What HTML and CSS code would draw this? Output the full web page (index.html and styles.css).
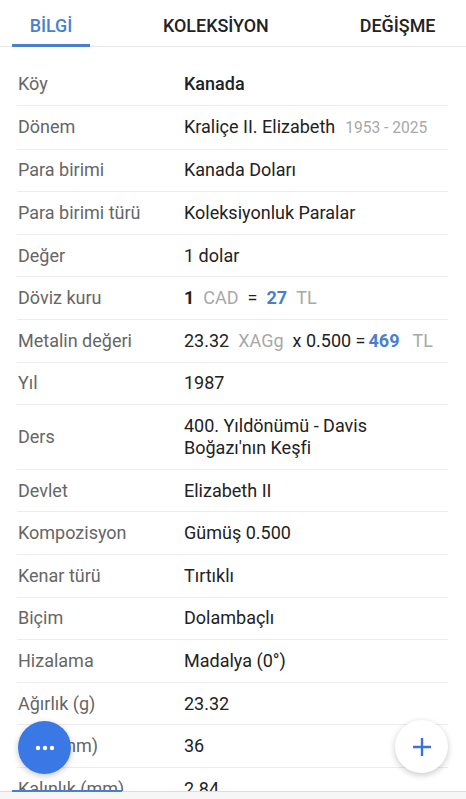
FILE: index.html
```html
<!DOCTYPE html>
<html lang="tr">
<head>
<meta charset="utf-8">
<title>Bilgi</title>
<link rel="stylesheet" href="styles.css">
</head>
<body>
<div class="screen">
  <nav class="tabs">
    <div class="tab active">BİLGİ</div>
    <div class="tab">KOLEKSİYON</div>
    <div class="tab">DEĞİŞME</div>
  </nav>
  <div class="list">
    <div class="row"><div class="label">Köy</div><div class="value strong">Kanada</div></div>
    <div class="row"><div class="label">Dönem</div><div class="value">Kraliçe II. Elizabeth<span class="muted date">1953 - 2025</span></div></div>
    <div class="row"><div class="label">Para birimi</div><div class="value">Kanada Doları</div></div>
    <div class="row"><div class="label">Para birimi türü</div><div class="value">Koleksiyonluk Paralar</div></div>
    <div class="row"><div class="label">Değer</div><div class="value">1 dolar</div></div>
    <div class="row"><div class="label">Döviz kuru</div><div class="value"><b class="num">1</b><span class="muted gap">CAD</span><span class="gap">=</span><b class="blue gap">27</b><span class="muted gap">TL</span></div></div>
    <div class="row"><div class="label">Metalin değeri</div><div class="value">23.32<span class="muted gap">XAGg</span><span class="gap">x 0.500 =</span><b class="blue gap-s">469</b><span class="muted gap-l">TL</span></div></div>
    <div class="row"><div class="label">Yıl</div><div class="value">1987</div></div>
    <div class="row"><div class="label">Ders</div><div class="value">400. Yıldönümü - Davis<br>Boğazı'nın Keşfi</div></div>
    <div class="row"><div class="label">Devlet</div><div class="value">Elizabeth II</div></div>
    <div class="row"><div class="label">Kompozisyon</div><div class="value">Gümüş 0.500</div></div>
    <div class="row"><div class="label">Kenar türü</div><div class="value">Tırtıklı</div></div>
    <div class="row"><div class="label">Biçim</div><div class="value">Dolambaçlı</div></div>
    <div class="row"><div class="label">Hizalama</div><div class="value">Madalya (0°)</div></div>
    <div class="row"><div class="label">Ağırlık (g)</div><div class="value">23.32</div></div>
    <div class="row"><div class="label">Çap (mm)</div><div class="value">36</div></div>
    <div class="row"><div class="label">Kalınlık (mm)</div><div class="value">2.84</div></div>
  </div>
  <div class="bottombar"><span class="indicator"></span></div>
  <button class="fab fab-more" aria-label="Daha fazla">
    <svg width="20" height="6" viewBox="0 0 20 6"><circle cx="3" cy="3" r="2.2" fill="#fff"/><circle cx="10" cy="3" r="2.2" fill="#fff"/><circle cx="17" cy="3" r="2.2" fill="#fff"/></svg>
  </button>
  <button class="fab fab-add" aria-label="Ekle">
    <svg width="20" height="20" viewBox="0 0 20 20"><path d="M10 1v18M1 10h18" stroke="#3b74d6" stroke-width="2.4" fill="none"/></svg>
  </button>
</div>
</body>
</html>
```

FILE: styles.css
```css
* { box-sizing: border-box; }
html, body {
  margin: 0;
  padding: 0;
  background: #fff;
  overflow: hidden;
}
body {
  font-family: Roboto, "Noto Sans", "Liberation Sans", sans-serif;
  color: #222;
}
.screen {
  position: relative;
  width: 466px;
  height: 799px;
  overflow: hidden;
}
.tabs {
  display: flex;
  align-items: center;
  gap: 55px;
  height: 47px;
  border-bottom: 1px solid #e8e8e8;
  padding: 0 0 0 12px;
  white-space: nowrap;
}
.tab {
  position: relative;
  flex: none;
  font-size: 17.9px;
  font-weight: 500;
  color: #222;
  height: 46px;
  line-height: 52px;
  padding: 0 18px;
}
.tab.active {
  color: #4a7fd0;
  width: 78px;
  padding: 0;
  text-align: center;
}
.tab.active::after {
  content: "";
  position: absolute;
  left: 0;
  right: 0;
  bottom: -1px;
  height: 3px;
  background: #4a7fd0;
}
.list {
  padding: 16.5px 18px 0 17px;
}
.row {
  display: flex;
  align-items: center;
  border-bottom: 1px solid #ececec;
  padding: 9.8px 0;
  font-size: 18px;
  line-height: 22px;
  white-space: nowrap;
}
.label {
  width: 167px;
  flex: none;
  padding-left: 1px;
  color: #666;
}
.value {
  color: #222;
}
.strong { font-weight: 500; }
.muted { color: #a8a8a8; }
.date { font-size: 15.6px; margin-left: 10px; }
.gap { margin-left: 9px; }
.gap-s { margin-left: 3px; }
.gap-l { margin-left: 13px; }
.num { font-weight: 700; }
.blue { color: #4a7fd0; font-weight: 700; }
.bottombar {
  position: absolute;
  left: 0;
  right: 0;
  bottom: 0;
  height: 8px;
  background: #f6f6f6;
  border-top: 1px solid #dcdcdc;
}
.indicator {
  position: absolute;
  left: 12px;
  top: -2px;
  width: 110px;
  height: 2px;
  background: #4a7fd0;
}
.fab {
  position: absolute;
  width: 53px;
  height: 53px;
  border-radius: 50%;
  border: none;
  padding: 0;
  display: flex;
  align-items: center;
  justify-content: center;
  box-shadow: 0 2px 6px rgba(0,0,0,0.22);
}
.fab-more {
  left: 18px;
  top: 721px;
  background: #3a78e6;
}
.fab-add {
  left: 395px;
  top: 720px;
  background: #fff;
}
```
